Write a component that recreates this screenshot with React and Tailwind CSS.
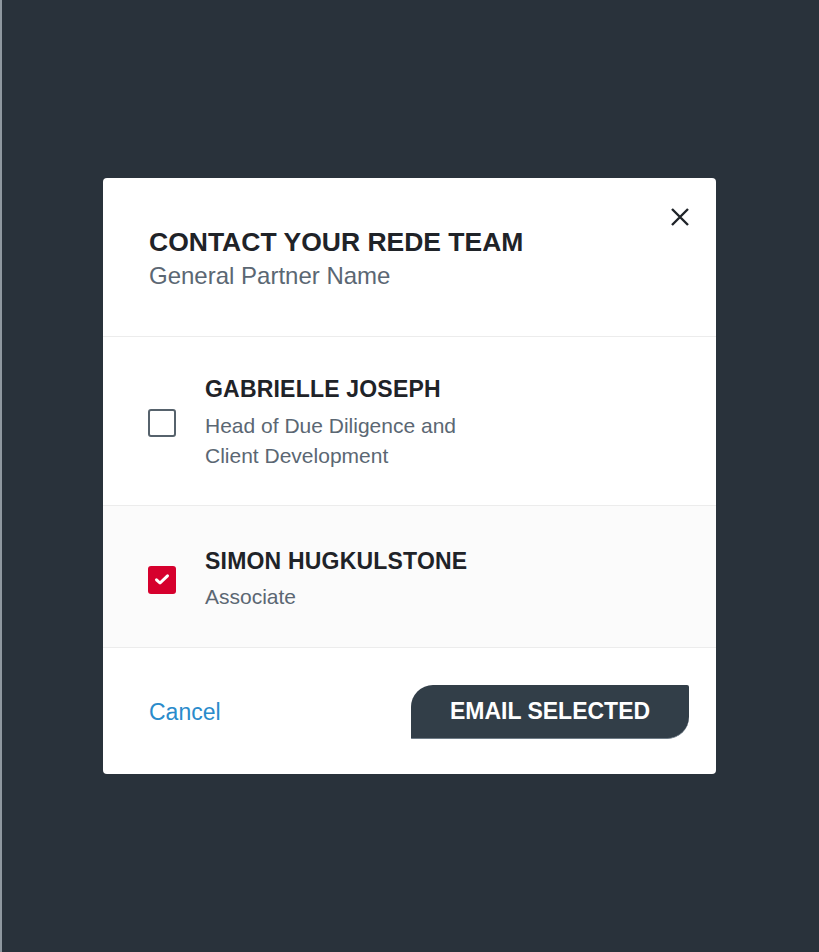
const people = [
  {
    name: 'GABRIELLE JOSEPH',
    title: ['Head of Due Diligence and', 'Client Development'],
    checked: false,
  },
  {
    name: 'SIMON HUGKULSTONE',
    title: ['Associate'],
    checked: true,
  },
];

const Checkbox = ({ checked }) =>
  checked ? (
    <div className="w-[28px] h-[28px] rounded-[3px] bg-[#d6002d] flex items-center justify-center shrink-0">
      <svg width="16" height="13" viewBox="0 0 16 13" fill="none">
        <path d="M2.5 6.8 L6 10 L13.5 2.8" stroke="white" strokeWidth="3" strokeLinecap="round" strokeLinejoin="round" />
      </svg>
    </div>
  ) : (
    <div className="w-[28px] h-[28px] rounded-[3px] border-2 border-[#56626c] bg-white shrink-0" />
  );

const PersonRow = ({ person }) => (
  <div
    className={`flex items-center pl-[45px] pr-8 border-b border-[#ececec] ${
      person.checked ? 'bg-[#fbfbfb] pt-[41px] pb-[35px]' : 'bg-white pt-[38px] pb-[34px]'
    }`}
  >
    <Checkbox checked={person.checked} />
    <div className="ml-[29px]">
      <p className="text-[23px] leading-[28px] font-bold text-[#1f2328] tracking-[0.2px]">{person.name}</p>
      <div className={`${person.checked ? 'mt-[7px]' : 'mt-[8px]'} text-[21px] leading-[30px] text-[#5b6773]`}>
        {person.title.map((line) => (
          <p key={line}>{line}</p>
        ))}
      </div>
    </div>
  </div>
);

const App = () => {
  return (
    <div
      className="w-full min-h-[952px] bg-[#29323b] border-l-2 border-[#8f98a0] pr-[2px] flex items-center justify-center"
      style={{ fontFamily: '"Liberation Sans", Arial, sans-serif' }}
    >
      <div className="relative w-[613px] bg-white rounded-[4px] overflow-hidden">
        <button className="absolute top-[29px] right-[26px] w-[20px] h-[20px] flex items-center justify-center">
          <svg width="20" height="20" viewBox="0 0 20 20" fill="none">
            <path d="M2 2 L18 18 M18 2 L2 18" stroke="#1f2328" strokeWidth="2.4" />
          </svg>
        </button>

        <div className="pl-[46px] pt-[49px] pb-[46px] border-b border-[#ececec]">
          <h2 className="text-[26.5px] leading-[30px] font-bold text-[#1f2328]">CONTACT YOUR REDE TEAM</h2>
          <p className="mt-[5px] text-[24px] leading-[28px] text-[#5b6773]">General Partner Name</p>
        </div>

        {people.map((p) => (
          <PersonRow key={p.name} person={p} />
        ))}

        <div className="flex items-center justify-between pl-[46px] pr-[27px] pt-[37px] pb-[35px]">
          <button className="text-[23px] text-[#2a8bcb]">Cancel</button>
          <button className="w-[278px] h-[54px] bg-[#323e48] text-white text-[23px] font-bold rounded-tl-[22px] rounded-br-[22px] rounded-tr-[2px] rounded-bl-[1px] border-b border-[#6f7c87]">
            EMAIL SELECTED
          </button>
        </div>
      </div>
    </div>
  );
};

export default App;
